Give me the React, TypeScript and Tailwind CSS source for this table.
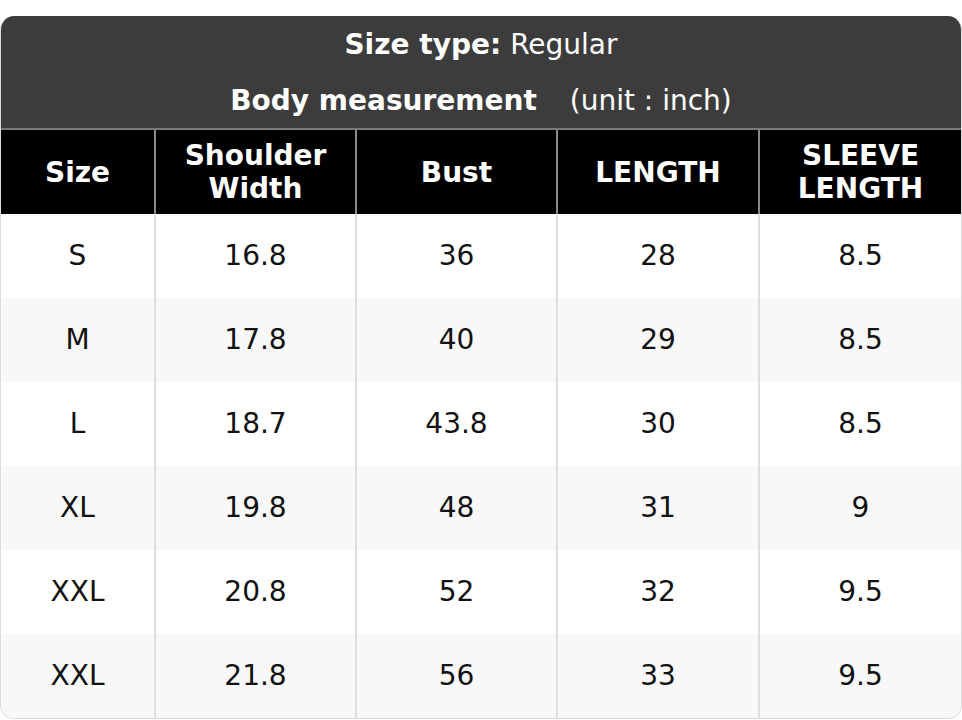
import React from "react";

const rows = [
  ["S", "16.8", "36", "28", "8.5"],
  ["M", "17.8", "40", "29", "8.5"],
  ["L", "18.7", "43.8", "30", "8.5"],
  ["XL", "19.8", "48", "31", "9"],
  ["XXL", "20.8", "52", "32", "9.5"],
  ["XXL", "21.8", "56", "33", "9.5"],
];

const heads: React.ReactNode[] = [
  "Size",
  <>Shoulder<br />Width</>,
  "Bust",
  "LENGTH",
  <>SLEEVE<br />LENGTH</>,
];

export default function App() {
  return (
    <div
      className="w-[962px] pt-4 bg-white"
      style={{ fontFamily: '"DejaVu Sans", sans-serif' }}
    >
      <div className="rounded-[14px] overflow-hidden border-x border-b border-[#dcdcdc]">
        <div className="bg-[#3c3c3c] text-white text-[28px] leading-[33px] border-b-2 border-[#7a7a7a]">
          <div className="h-[56px] flex items-center justify-center">
            <span className="font-bold">Size type:</span>
            <span className="ml-[9px]">Regular</span>
          </div>
          <div className="h-[56px] flex items-center justify-center">
            <span className="font-bold">Body measurement</span>
            <span className="ml-[33px]">(unit : inch)</span>
          </div>
        </div>
        <div className="grid grid-cols-[153px_201px_201px_202px_1fr] bg-black text-white font-bold text-[28px] leading-[33px] text-center">
          {heads.map((h, i) => (
            <div
              key={i}
              className={`h-[84px] flex items-center justify-center ${i > 0 ? "border-l-2 border-[#8a8a8a]" : ""}`}
            >
              <div>{h}</div>
            </div>
          ))}
        </div>
        {rows.map((r, ri) => (
          <div
            key={ri}
            className={`grid grid-cols-[153px_201px_201px_202px_1fr] text-[28px] text-[#111] text-center ${ri % 2 === 1 ? "bg-[#f8f8f8]" : "bg-white"}`}
          >
            {r.map((c, ci) => (
              <div
                key={ci}
                className={`h-[84px] flex items-center justify-center ${ci > 0 ? "border-l-2 border-[#dedede]" : ""}`}
              >
                {c}
              </div>
            ))}
          </div>
        ))}
      </div>
    </div>
  );
}
